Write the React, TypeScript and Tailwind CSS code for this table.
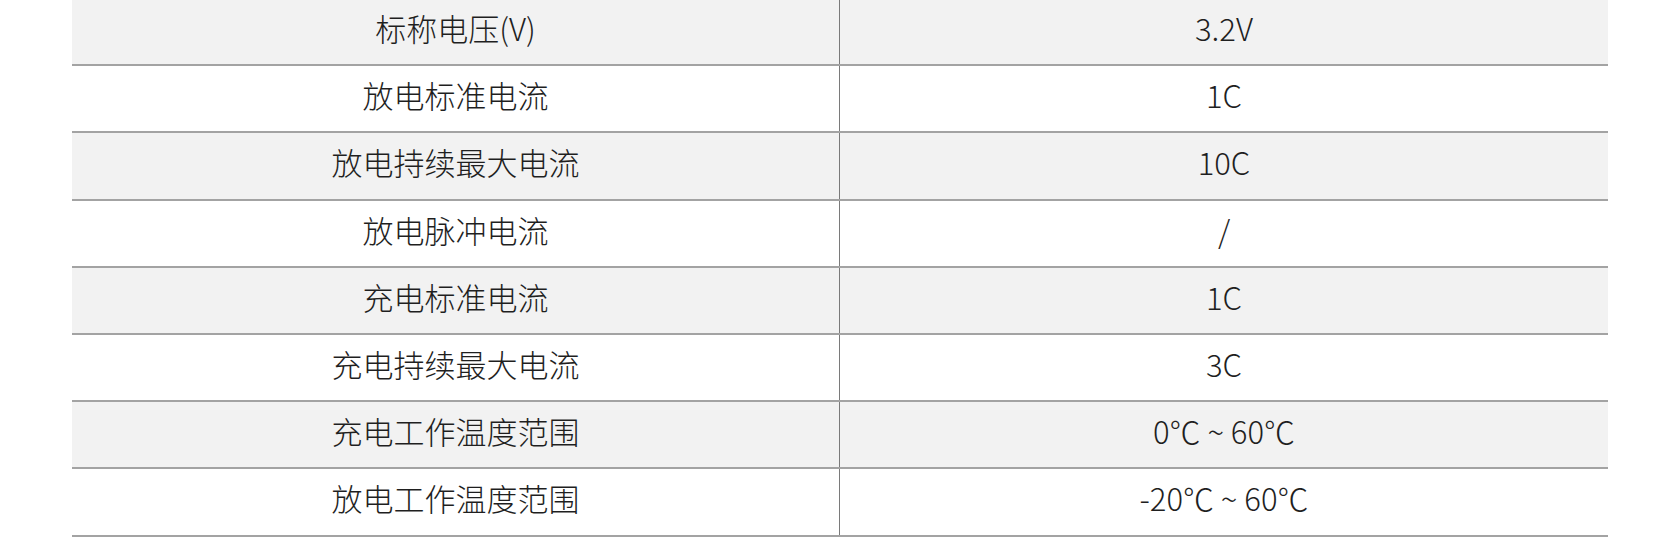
const specs: [string, string][] = [
  ["标称电压(V)", "3.2V"],
  ["放电标准电流", "1C"],
  ["放电持续最大电流", "10C"],
  ["放电脉冲电流", "/"],
  ["充电标准电流", "1C"],
  ["充电持续最大电流", "3C"],
  ["充电工作温度范围", "0℃ ~ 60℃"],
  ["放电工作温度范围", "-20℃ ~ 60℃"],
];

export default function App() {
  return (
    <div className="h-[537px] w-full overflow-hidden bg-white font-['Noto_Sans_CJK_SC','Noto_Sans',sans-serif] text-[#1f1f1f]">
      <div className="mx-[72px] -mt-[1px]">
        {specs.map(([label, value], i) => (
          <div
            key={label}
            className={`box-border flex h-[67.2px] items-center border-b-2 border-[#a3a3a3] text-[31px] font-light leading-none ${
              i % 2 === 0 ? "bg-[#f2f2f2]" : "bg-white"
            }`}
          >
            <div className="flex h-full w-1/2 items-center justify-center border-r border-[#7a7a7a] pb-[8px]">
              {label}
            </div>
            <div className="flex h-full w-1/2 items-center justify-center pb-[8px]">{value}</div>
          </div>
        ))}
      </div>
    </div>
  );
}
